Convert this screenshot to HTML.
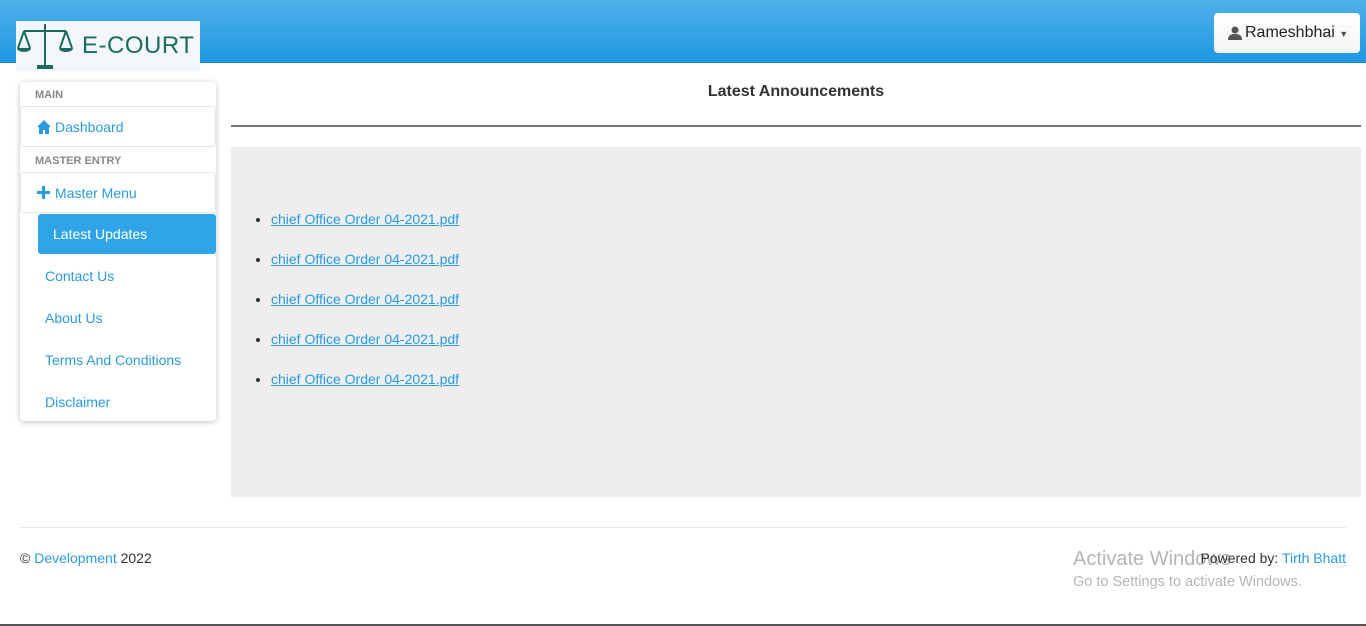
<!DOCTYPE html><html><head><style>
body{margin:0;width:1366px;height:626px;font-family:"Liberation Sans",sans-serif;font-size:14px;color:#333;background:#fff;position:relative;overflow:hidden}
.nav{position:absolute;left:0;top:0;width:1366px;height:62px;background:linear-gradient(#4fb0ea,#1f98e0);border-bottom:1px solid #1a8ad0}
.logo{position:absolute;left:16px;top:21px;width:184px;height:50px;background:#f3f6fb}
.logo span{position:absolute;left:66px;top:11px;font-size:24px;color:#1b6b5e;letter-spacing:0.5px}
.user{position:absolute;left:1214px;top:13px;width:146px;height:40px;background:linear-gradient(#fff,#f3f3f3);border-radius:4px;font-size:16px;color:#222;line-height:40px;box-sizing:border-box;padding-left:31px}
.side{position:absolute;left:20px;top:82px;width:196px;height:339px;background:#fff;border-radius:4px;box-shadow:0 1px 6px rgba(0,0,0,.25)}
.hd{position:absolute;left:15px;font-size:11px;font-weight:bold;color:#888}
.it{position:absolute;left:0;width:196px;height:41px;border:1px solid #e6e6e6;box-sizing:border-box;border-radius:3px;color:#2b9ae0;line-height:40px;padding-left:34px;font-size:14px}
.l{position:absolute;left:25px;color:#2b9ae0;font-size:14px}
a{color:#2b9ae0}
</style></head><body>
<div class="nav"></div>
<div class="logo"><svg width="60" height="50" style="position:absolute;left:0;top:0"><g stroke="#1b6b5e" stroke-width="2" fill="none"><line x1="29" y1="3" x2="29" y2="44"/><line x1="8" y1="10" x2="50" y2="10"/><path d="M8 10 L2 27 M8 10 L14 27 M50 10 L44 27 M50 10 L56 27"/></g><g fill="#1b6b5e"><path d="M1 27h14a7 4 0 0 1-14 0z"/><path d="M43 27h14a7 4 0 0 1-14 0z"/><rect x="21" y="44" width="16" height="4"/></g></svg><span>E-COURT</span></div>
<div class="user"><svg width="14" height="14" style="position:absolute;left:14px;top:13px"><circle cx="7" cy="4" r="3.5" fill="#555"/><path d="M0 14c0-5 3-6 7-6s7 1 7 6z" fill="#555"/></svg>Rameshbhai <span style="font-size:9px;color:#555">▼</span></div>
<div class="side">
<div class="hd" style="top:7px">MAIN</div>
<div class="it" style="top:24px"><svg width="14" height="14" style="position:absolute;left:16px;top:13px"><path d="M7 0L0 7h2v7h4v-4h2v4h4V7h2z" fill="#2b9ae0"/></svg>Dashboard</div>
<div class="hd" style="top:73px">MASTER ENTRY</div>
<div class="it" style="top:90px"><svg width="13" height="13" style="position:absolute;left:16px;top:13px"><path d="M5 0h3v5h5v3H8v5H5V8H0V5h5z" fill="#2b9ae0"/></svg>Master Menu</div>
<div style="position:absolute;left:18px;top:132px;width:178px;height:40px;background:#2fa5e8;color:#fff;line-height:40px;padding-left:15px;box-sizing:border-box;border-radius:3px">Latest Updates</div>
<div class="l" style="top:186px">Contact Us</div>
<div class="l" style="top:228px">About Us</div>
<div class="l" style="top:270px">Terms And Conditions</div>
<div class="l" style="top:312px">Disclaimer</div>
</div>
<div style="position:absolute;left:231px;top:83px;width:1130px;text-align:center;font-weight:bold;font-size:16px">Latest Announcements</div>
<div style="position:absolute;left:231px;top:125px;width:1130px;height:2px;background:#777"></div>
<div style="position:absolute;left:231px;top:147px;width:1130px;height:350px;background:#eee">
<ul style="margin:0;padding-left:40px;position:absolute;top:52px;line-height:40px"><li><a href="#">chief Office Order 04-2021.pdf</a></li><li><a href="#">chief Office Order 04-2021.pdf</a></li><li><a href="#">chief Office Order 04-2021.pdf</a></li><li><a href="#">chief Office Order 04-2021.pdf</a></li><li><a href="#">chief Office Order 04-2021.pdf</a></li></ul></div>
<div style="position:absolute;left:20px;top:527px;width:1326px;height:1px;background:#e6e6e6"></div>
<div style="position:absolute;left:20px;top:550px">© <span style="color:#2b9ae0">Development</span> 2022</div>
<div style="position:absolute;left:1073px;top:548px;font-size:20px;color:#b5b5b5">Activate Windows</div>
<div style="position:absolute;left:1073px;top:574px;font-size:14.5px;color:#b5b5b5">Go to Settings to activate Windows.</div>
<div style="position:absolute;right:20px;top:550px">Powered by: <span style="color:#2b9ae0">Tirth Bhatt</span></div>
<div style="position:absolute;left:0;top:624px;width:1366px;height:2px;background:#555"></div>
</body></html>
